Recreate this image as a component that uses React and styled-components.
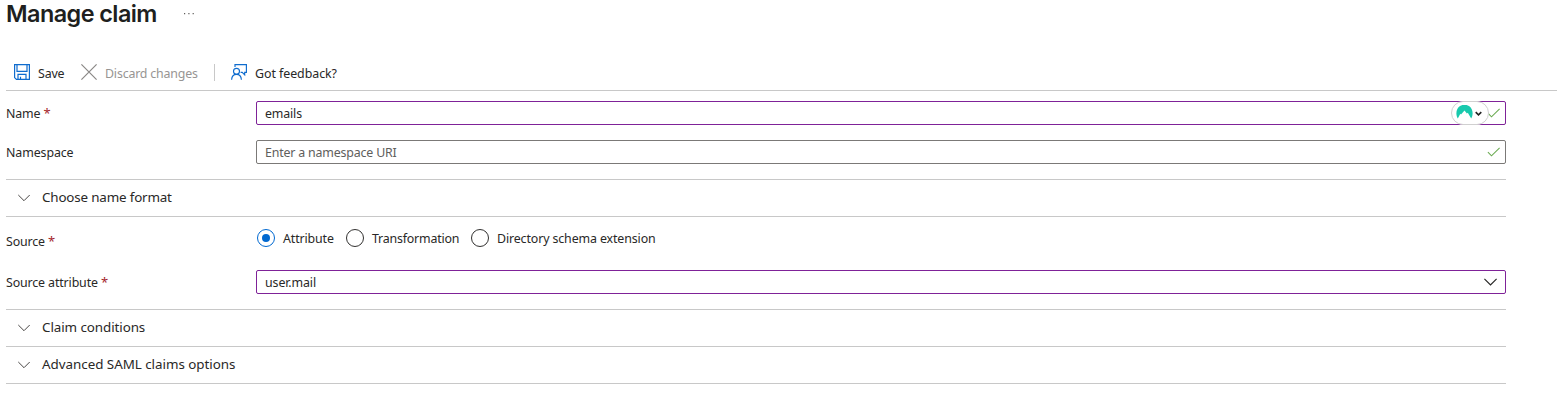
import React from "react";
import styled, { createGlobalStyle } from "styled-components";

const GlobalStyle = createGlobalStyle`
  * { box-sizing: border-box; }
  body {
    margin: 0;
    background: #fff;
    color: #292827;
    font-family: "Noto Sans", "Open Sans", sans-serif;
    font-size: 12.4px;
    overflow: hidden;
  }
  svg { display: block; flex: none; fill: none; }
`;

const Page = styled.main`
  height: 412px;
  padding-left: 6px;
`;

const Header = styled.header`
  display: flex;
  height: 54px;
  align-items: flex-start;
`;

const Title = styled.h1`
  margin: 0;
  width: 177px;
  font: 600 23.4px/28px Inter, sans-serif;
  letter-spacing: -0.55px;
  color: #201f1e;
  white-space: nowrap;
`;

const MoreDots = styled.svg`
  margin-top: 12px;
`;

const Toolbar = styled.div`
  display: flex;
  align-items: center;
  height: 37px;
  padding-left: 8px;
  border-bottom: 1px solid #c8c8c8;
`;

const Command = styled.button`
  display: flex;
  align-items: center;
  gap: 8px;
  width: ${(p) => p.$width};
  padding: 0;
  border: 0;
  background: none;
  font: inherit;
  letter-spacing: ${(p) => p.$tracking || "0"};
  white-space: nowrap;
  color: ${(p) => (p.$disabled ? "#979593" : "#292827")};

  span { padding-top: 2px; }
`;

const Divider = styled.div`
  width: 1px;
  height: 17px;
  margin-right: 16px;
  background: #c8c8c8;
`;

const Form = styled.form`
  width: 1500px;
`;

const Field = styled.div`
  display: grid;
  grid-template-columns: 250px 1fr;
  grid-template-rows: 24px;
  align-items: center;
  height: 24px;
  margin-top: ${(p) => p.$top};
`;

const Label = styled.label`
  letter-spacing: ${(p) => p.$tracking || "-0.13px"};
  padding-top: ${(p) => p.$drop || "1px"};
  line-height: 18px;
`;

const Required = styled.span`
  color: #a4262c;
  font-size: 13px;
  line-height: 1;
`;

const InputBox = styled.div`
  position: relative;
  display: flex;
  align-items: center;
  justify-content: space-between;
  height: 24px;
  padding: 0 ${(p) => p.$right || "4px"} 0 8px;
  border: 1px solid ${(p) => (p.$edited ? "#7f2298" : "#7b7977")};
  border-radius: 2px;
  color: ${(p) => (p.$placeholder ? "#605e5c" : "#292827")};
  letter-spacing: ${(p) => p.$tracking || "0"};
`;

const Extension = styled.div`
  position: absolute;
  right: 16px;
  top: -1px;
  display: flex;
  align-items: center;
  justify-content: center;
  gap: 2px;
  width: 38px;
  height: 24px;
  padding-right: 2px;
  border: 1px solid #d0d0d0;
  border-radius: 12px;
  background: #fff;
`;

const Section = styled.div`
  display: flex;
  align-items: center;
  gap: 12px;
  height: ${(p) => (p.$joined ? "37px" : "38px")};
  margin-top: ${(p) => p.$top || "0"};
  padding: 0 0 0 12px;
  border: solid #c8c8c8;
  border-width: ${(p) => (p.$joined ? "0 0 1px" : "1px 0")};
  font-size: 13.4px;
  letter-spacing: ${(p) => p.$tracking || "0"};

  span { padding-bottom: 2px; }
`;

const Radios = styled.div`
  display: flex;
  align-items: center;
  height: 20px;
  margin-bottom: 2px;
  padding-left: 1px;
`;

const Radio = styled.div`
  display: flex;
  align-items: center;
  gap: 8px;
  width: ${(p) => p.$width};
  letter-spacing: ${(p) => p.$tracking || "0"};
  white-space: nowrap;
`;

const RadioMark = styled.span`
  display: grid;
  place-items: center;
  width: 18px;
  height: 18px;
  border: 1px solid ${(p) => (p.$on ? "#0068d0" : "#323130")};
  border-radius: 50%;

  &::after {
    content: "";
    width: 8px;
    height: 8px;
    border-radius: 50%;
    background: ${(p) => (p.$on ? "#0068d0" : "transparent")};
  }
`;

const Chevron = () => (
  <svg width="12" height="8" viewBox="0 0 12 8" stroke="#484644">
    <path d="M.3 1 6 6.7 11.7 1" />
  </svg>
);

const Check = () => (
  <svg width="13" height="10" viewBox="0 0 13 10" stroke="#6bab52" strokeWidth="1.1">
    <path d="M.9 5.2 4.5 8.8 12.6.8" />
  </svg>
);

const Star = () => <Required>*</Required>;

export default function App() {
  return (
    <>
      <GlobalStyle />
      <Page>
        <Header>
          <Title>Manage claim</Title>
          <MoreDots width="12" height="4" viewBox="0 0 12 4">
            <path d="M1 1h1.2v1.2H1zM5.3 1h1.2v1.2H5.3zM9.6 1h1.2v1.2H9.6z" fill="#605e5c" />
          </MoreDots>
        </Header>
        <Toolbar>
          <Command type="button" $width="67px" $tracking="-0.15px">
            <svg width="16" height="16" viewBox="0 0 16 16" stroke="#0f6cce" strokeWidth="1.2">
              <path d="M.6.6h14.8v14.8H2.4L.6 13.6zM3 .6v6.8h10V.6M4 15.4v-5h8v5M6.5 15v-2.3" />
            </svg>
            <span>Save</span>
          </Command>
          <Command type="button" $disabled $width="133px" $tracking="-0.18px">
            <svg width="16" height="16" viewBox="0 0 16 16" stroke="#8a8886" strokeWidth="1.2">
              <path d="M.4.4 15.6 15.6M15.6.4.4 15.6" />
            </svg>
            <span>Discard changes</span>
          </Command>
          <Divider />
          <Command type="button" $tracking="-0.05px">
            <svg width="16" height="16" viewBox="0 0 16 16" stroke="#0f6cce" strokeWidth="1.15">
              <path d="M4 2.9V.6h11.4v7.8h-1.7v2.4l-2.5-2.4H9.6" />
              <circle cx="5.5" cy="7.3" r="3" />
              <path d="M.6 15.8c.2-3.4 2.2-5.4 4.9-5.4s4.7 2 4.9 5.4" />
            </svg>
            <span>Got feedback?</span>
          </Command>
        </Toolbar>
        <Form>
          <Field $top="10px">
            <Label>Name <Star /></Label>
            <InputBox $edited $right="5px" $tracking="-0.15px">
              <span>emails</span>
              <Check />
              <Extension>
                <svg width="17" height="16" viewBox="0 0 17 16">
                  <path d="M1.8 13.6C-.9 8.6.5 3.2 4 1.1a8.4 8.4 0 0 1 9 0c3.5 2.1 4.9 7.5 2.2 12.5l-3.4-5.9-.9.9-2.4-3-3.5 4-.7-.8z" fill="#18c9ad" />
                </svg>
                <svg width="7" height="5" viewBox="0 0 7 5" stroke="#222" strokeWidth="1.6">
                  <path d="M.7 1.2 3.5 3.8 6.3 1.2" />
                </svg>
              </Extension>
            </InputBox>
          </Field>
          <Field $top="15px">
            <Label $tracking="-0.1px">Namespace</Label>
            <InputBox $placeholder $right="5px" $tracking="-0.18px">
              <span>Enter a namespace URI</span>
              <Check />
            </InputBox>
          </Field>
          <Section $top="15px" $tracking="-0.17px"><Chevron /><span>Choose name format</span></Section>
          <Field $top="10px">
            <Label $drop="6px">Source <Star /></Label>
            <Radios>
              <Radio $width="89px" $tracking="-0.12px"><RadioMark $on />Attribute</Radio>
              <Radio $width="125px" $tracking="-0.19px"><RadioMark />Transformation</Radio>
              <Radio $tracking="-0.12px"><RadioMark />Directory schema extension</Radio>
            </Radios>
          </Field>
          <Field $top="19px">
            <Label>Source attribute <Star /></Label>
            <InputBox $edited $right="8px" $tracking="-0.1px">
              <span>user.mail</span>
              <svg width="13" height="8" viewBox="0 0 13 8" stroke="#292827" strokeWidth="1.2">
                <path d="M.4.8 6.5 6.9 12.6.8" />
              </svg>
            </InputBox>
          </Field>
          <Section $top="15px" $tracking="-0.08px"><Chevron /><span>Claim conditions</span></Section>
          <Section $joined $tracking="-0.03px"><Chevron /><span>Advanced SAML claims options</span></Section>
        </Form>
      </Page>
    </>
  );
}
